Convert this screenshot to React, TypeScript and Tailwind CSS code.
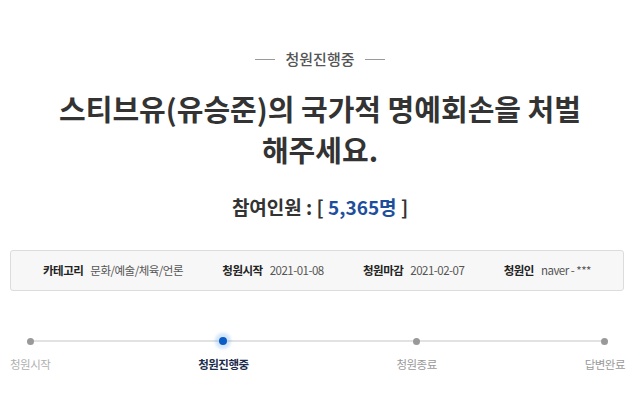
const font = "font-['Noto_Sans_CJK_KR','Noto_Sans',sans-serif]"

const infoItems = [
  { label: '카테고리', value: '문화/예술/체육/언론' },
  { label: '청원시작', value: '2021-01-08' },
  { label: '청원마감', value: '2021-02-07' },
  { label: '청원인', value: 'naver - ***' },
]

const steps = [
  { label: '청원시작', state: 'done' },
  { label: '청원진행중', state: 'active' },
  { label: '청원종료', state: 'todo' },
  { label: '답변완료', state: 'todo' },
]

export default function App() {
  return (
    <div className={`w-[640px] h-[409px] bg-white overflow-hidden ${font}`}>
      {/* status label */}
      <div className="mt-[49px] flex items-center justify-center gap-[10px]">
        <span className="w-5 h-px bg-[#9a9a9a]" />
        <span className="text-[15px] leading-[20px] font-medium text-[#555]">청원진행중</span>
        <span className="w-5 h-px bg-[#9a9a9a]" />
      </div>

      {/* title */}
      <h1 className="mt-[19px] text-center text-[29px] leading-[41px] font-bold text-[#333]">
        스티브유(유승준)의 국가적 명예회손을 처벌
        <br />
        해주세요.
      </h1>

      {/* participants */}
      <div className="mt-[25px] text-center text-[19px] leading-[24px] font-bold text-[#333]">
        참여인원 : [ <span className="text-[#1d4f9c]">5,365명</span> ]
      </div>

      {/* info box */}
      <div className="mt-[31px] mx-[10px] w-[614px] h-[41px] flex items-center justify-between px-[32px] bg-[#f7f7f7] border border-[#dcdcdc] rounded-[3px] text-[11.5px] tracking-[-0.5px]">
        {infoItems.map((item) => (
          <div key={item.label} className="flex items-center gap-[7px]">
            <span className="font-bold text-[#222]">{item.label}</span>
            <span className="text-[#555]">{item.value}</span>
          </div>
        ))}
      </div>

      {/* progress */}
      <div className="relative mt-[42px] pl-[10px] pr-[15px] flex justify-between">
        <div className="absolute left-[31px] right-[37px] top-[7px] h-[2px] bg-[#e2e2e2]" />
        {steps.map((step) => (
          <div key={step.label} className="relative flex flex-col items-center">
            <div className="h-4 flex items-center justify-center">
              {step.state === 'active' ? (
                <span className="w-[8px] h-[8px] rounded-full bg-[#0b5cc5] shadow-[0_0_3px_4px_rgba(60,140,230,0.22)]" />
              ) : (
                <span className="w-[7px] h-[7px] rounded-full bg-[#999]" />
              )}
            </div>
            <span
              className={
                step.state === 'active'
                  ? 'mt-[6px] text-[11.5px] leading-[18px] tracking-[-0.5px] font-bold text-[#1b2b4b]'
                  : step.state === 'done'
                  ? 'mt-[6px] text-[11.5px] leading-[18px] tracking-[-0.5px] text-[#b0b0b0]'
                  : 'mt-[6px] text-[11.5px] leading-[18px] tracking-[-0.5px] text-[#9a9a9a]'
              }
            >
              {step.label}
            </span>
          </div>
        ))}
      </div>
    </div>
  )
}
